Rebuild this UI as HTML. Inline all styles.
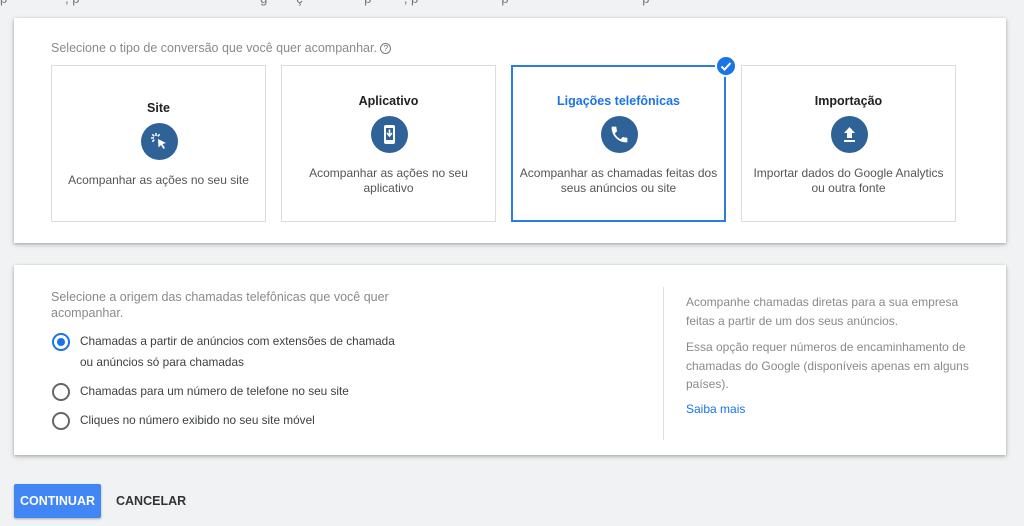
<!DOCTYPE html>
<html><head><meta charset="utf-8"><style>
*{box-sizing:border-box;margin:0;padding:0}
body{width:1024px;height:526px;overflow:hidden;background:#f1f2f3;font-family:"Liberation Sans",Arial,sans-serif;position:relative;color:#3c4043}
.top{position:absolute;top:-9px;left:0;font-size:13px;color:#777;white-space:nowrap}
.card{position:absolute;left:14px;width:992px;background:#fff;box-shadow:0 1px 3px rgba(0,0,0,.25),0 2px 6px rgba(0,0,0,.12)}
.lbl{position:absolute;font-size:12.5px;color:#8a8a8a}
.tile{position:absolute;top:47px;width:215px;height:157px;border:1px solid #dadce0;text-align:center}
.tile.sel{border:2px solid #2a7de1}
.tile h4{position:absolute;left:0;right:0;font-size:12.5px;font-weight:bold;color:#202124}
.tile .ic{position:absolute;left:89px;width:37px;height:37px;border-radius:50%;background:#2f6297}
.tile.sel .ic{left:88px}
.tile p{position:absolute;left:0;right:0;font-size:12px;line-height:15px;color:#555}
.ic svg{position:absolute;left:8px;top:8px}
.radio{position:absolute;width:18px;height:18px;border:2px solid #666;border-radius:50%}
.radio.on{border-color:#1a73e8}
.radio.on:after{content:"";position:absolute;left:3px;top:3px;width:8px;height:8px;border-radius:50%;background:#1a73e8}
.rt{position:absolute;font-size:11.8px;color:#3c4043;line-height:21px}
.rp{position:absolute;left:672px;font-size:12px;color:#8a8a8a;line-height:18.5px}
</style></head><body>
<div class="top">p&nbsp;&nbsp;&nbsp;&nbsp;&nbsp;&nbsp;&nbsp;&nbsp;&nbsp;&nbsp;&nbsp;&nbsp;&nbsp;&nbsp;&nbsp;&nbsp;, p&nbsp;&nbsp;&nbsp;&nbsp;&nbsp;&nbsp;&nbsp;&nbsp;&nbsp;&nbsp;&nbsp;&nbsp;&nbsp;&nbsp;&nbsp;&nbsp;&nbsp;&nbsp;&nbsp;&nbsp;&nbsp;&nbsp;&nbsp;&nbsp;&nbsp;&nbsp;&nbsp;&nbsp;&nbsp;&nbsp;&nbsp;&nbsp;&nbsp;&nbsp;&nbsp;&nbsp;&nbsp;&nbsp;&nbsp;&nbsp;&nbsp;&nbsp;&nbsp;&nbsp;&nbsp;&nbsp;&nbsp;&nbsp;&nbsp;&nbsp;g&nbsp;&nbsp;&nbsp;&nbsp;&nbsp;&nbsp;&nbsp;&nbsp;ç&nbsp;&nbsp;&nbsp;&nbsp;&nbsp;&nbsp;&nbsp;&nbsp;&nbsp;&nbsp;&nbsp;&nbsp;&nbsp;&nbsp;&nbsp;&nbsp;&nbsp;p&nbsp;&nbsp;&nbsp;&nbsp;&nbsp;&nbsp;&nbsp;&nbsp;&nbsp;, p&nbsp;&nbsp;&nbsp;&nbsp;&nbsp;&nbsp;&nbsp;&nbsp;&nbsp;&nbsp;&nbsp;&nbsp;&nbsp;&nbsp;&nbsp;&nbsp;&nbsp;&nbsp;&nbsp;&nbsp;&nbsp;&nbsp;&nbsp;p&nbsp;&nbsp;&nbsp;&nbsp;&nbsp;&nbsp;&nbsp;&nbsp;&nbsp;&nbsp;&nbsp;&nbsp;&nbsp;&nbsp;&nbsp;&nbsp;&nbsp;&nbsp;&nbsp;&nbsp;&nbsp;&nbsp;&nbsp;&nbsp;&nbsp;&nbsp;&nbsp;&nbsp;&nbsp;&nbsp;&nbsp;&nbsp;&nbsp;&nbsp;&nbsp;&nbsp;&nbsp;p</div>

<div class="card" style="top:18px;height:225px">
  <div class="lbl" style="left:37px;top:23px">Selecione o tipo de conversão que você quer acompanhar. <span style="display:inline-block;width:11px;height:11px;border:1px solid #777;border-radius:50%;font-size:8px;line-height:9px;text-align:center;color:#666;vertical-align:1px">?</span></div>
  <div class="tile" style="left:37px">
    <h4 style="top:35px">Site</h4>
    <div class="ic" style="top:57px"><svg width="21" height="21" viewBox="0 0 21 21"><path d="M9 8 L17 12 L13.5 13 L16 17 L14.5 18 L12 14 L9.5 16.5 Z" fill="#fff"/><g stroke="#fff" stroke-width="1.5"><path d="M7 2v3M2 7h3M3.3 3.3l2 2M10.7 3.3l-2 2M3.3 10.7l2-2"/></g></svg></div>
    <p style="top:107px">Acompanhar as ações no seu site</p>
  </div>
  <div class="tile" style="left:267px">
    <h4 style="top:28px">Aplicativo</h4>
    <div class="ic" style="top:50px"><svg width="21" height="21" viewBox="0 0 21 21"><rect x="5" y="1" width="11" height="19" rx="2" fill="#fff"/><rect x="7" y="4" width="7" height="12" fill="#2f6297"/><path d="M10.5 5.5v6M8 9l2.5 3 2.5-3" stroke="#fff" stroke-width="1.6" fill="none"/></svg></div>
    <p style="top:100px">Acompanhar as ações no seu<br>aplicativo</p>
  </div>
  <div class="tile sel" style="left:497px">
    <h4 style="top:27px;color:#1a73e8">Ligações telefônicas</h4>
    <div class="ic" style="top:49px"><svg width="21" height="21" viewBox="0 0 24 24"><path d="M6.6 10.8c1.4 2.8 3.8 5.1 6.6 6.6l2.2-2.2c.3-.3.7-.4 1-.2 1.1.4 2.3.6 3.6.6.6 0 1 .4 1 1V20c0 .6-.4 1-1 1C10.6 21 3 13.4 3 4c0-.6.4-1 1-1h3.5c.6 0 1 .4 1 1 0 1.3.2 2.5.6 3.6.1.3 0 .7-.2 1z" fill="#fff"/></svg></div>
    <p style="top:99px">Acompanhar as chamadas feitas dos<br>seus anúncios ou site</p>
    <div style="position:absolute;right:-13px;top:-12px;width:22px;height:22px;border-radius:50%;background:#1a73e8;border:2px solid #fff"><svg width="18" height="18" viewBox="0 0 18 18"><path d="M4.5 9.5l3 3 6-6.5" stroke="#fff" stroke-width="2" fill="none"/></svg></div>
  </div>
  <div class="tile" style="left:727px">
    <h4 style="top:28px">Importação</h4>
    <div class="ic" style="top:50px"><svg width="21" height="21" viewBox="0 0 21 21"><path d="M10.5 3 L16 9 H13 V14 H8 V9 H5 Z" fill="#fff"/><rect x="5" y="16" width="11" height="2" fill="#fff"/></svg></div>
    <p style="top:100px">Importar dados do Google Analytics<br>ou outra fonte</p>
  </div>
</div>

<div class="card" style="top:265px;height:190px">
  <div class="lbl" style="left:37px;top:24px;line-height:16px">Selecione a origem das chamadas telefônicas que você quer<br>acompanhar.</div>
  <div class="radio on" style="left:38px;top:68px"></div>
  <div class="rt" style="left:66px;top:66px">Chamadas a partir de anúncios com extensões de chamada<br>ou anúncios só para chamadas</div>
  <div class="radio" style="left:38px;top:118px"></div>
  <div class="rt" style="left:66px;top:116px">Chamadas para um número de telefone no seu site</div>
  <div class="radio" style="left:38px;top:147px"></div>
  <div class="rt" style="left:66px;top:145px">Cliques no número exibido no seu site móvel</div>
  <div style="position:absolute;left:649px;top:22px;width:1px;height:153px;background:#e0e0e0"></div>
  <div class="rp" style="top:28px">Acompanhe chamadas diretas para a sua empresa<br>feitas a partir de um dos seus anúncios.</div>
  <div class="rp" style="top:73px">Essa opção requer números de encaminhamento de<br>chamadas do Google (disponíveis apenas em alguns<br>países).</div>
  <div class="rp" style="top:135px;color:#1a73e8">Saiba mais</div>
</div>

<div style="position:absolute;left:14px;top:484px;width:87px;height:34px;background:#4285f4;border-radius:2px;box-shadow:0 1px 2px rgba(0,0,0,.3);color:#fff;font-weight:bold;font-size:12.5px;line-height:34px;text-align:center">CONTINUAR</div>
<div style="position:absolute;left:116px;top:484px;height:34px;line-height:34px;font-weight:bold;font-size:12.5px;color:#333">CANCELAR</div>
</body></html>
